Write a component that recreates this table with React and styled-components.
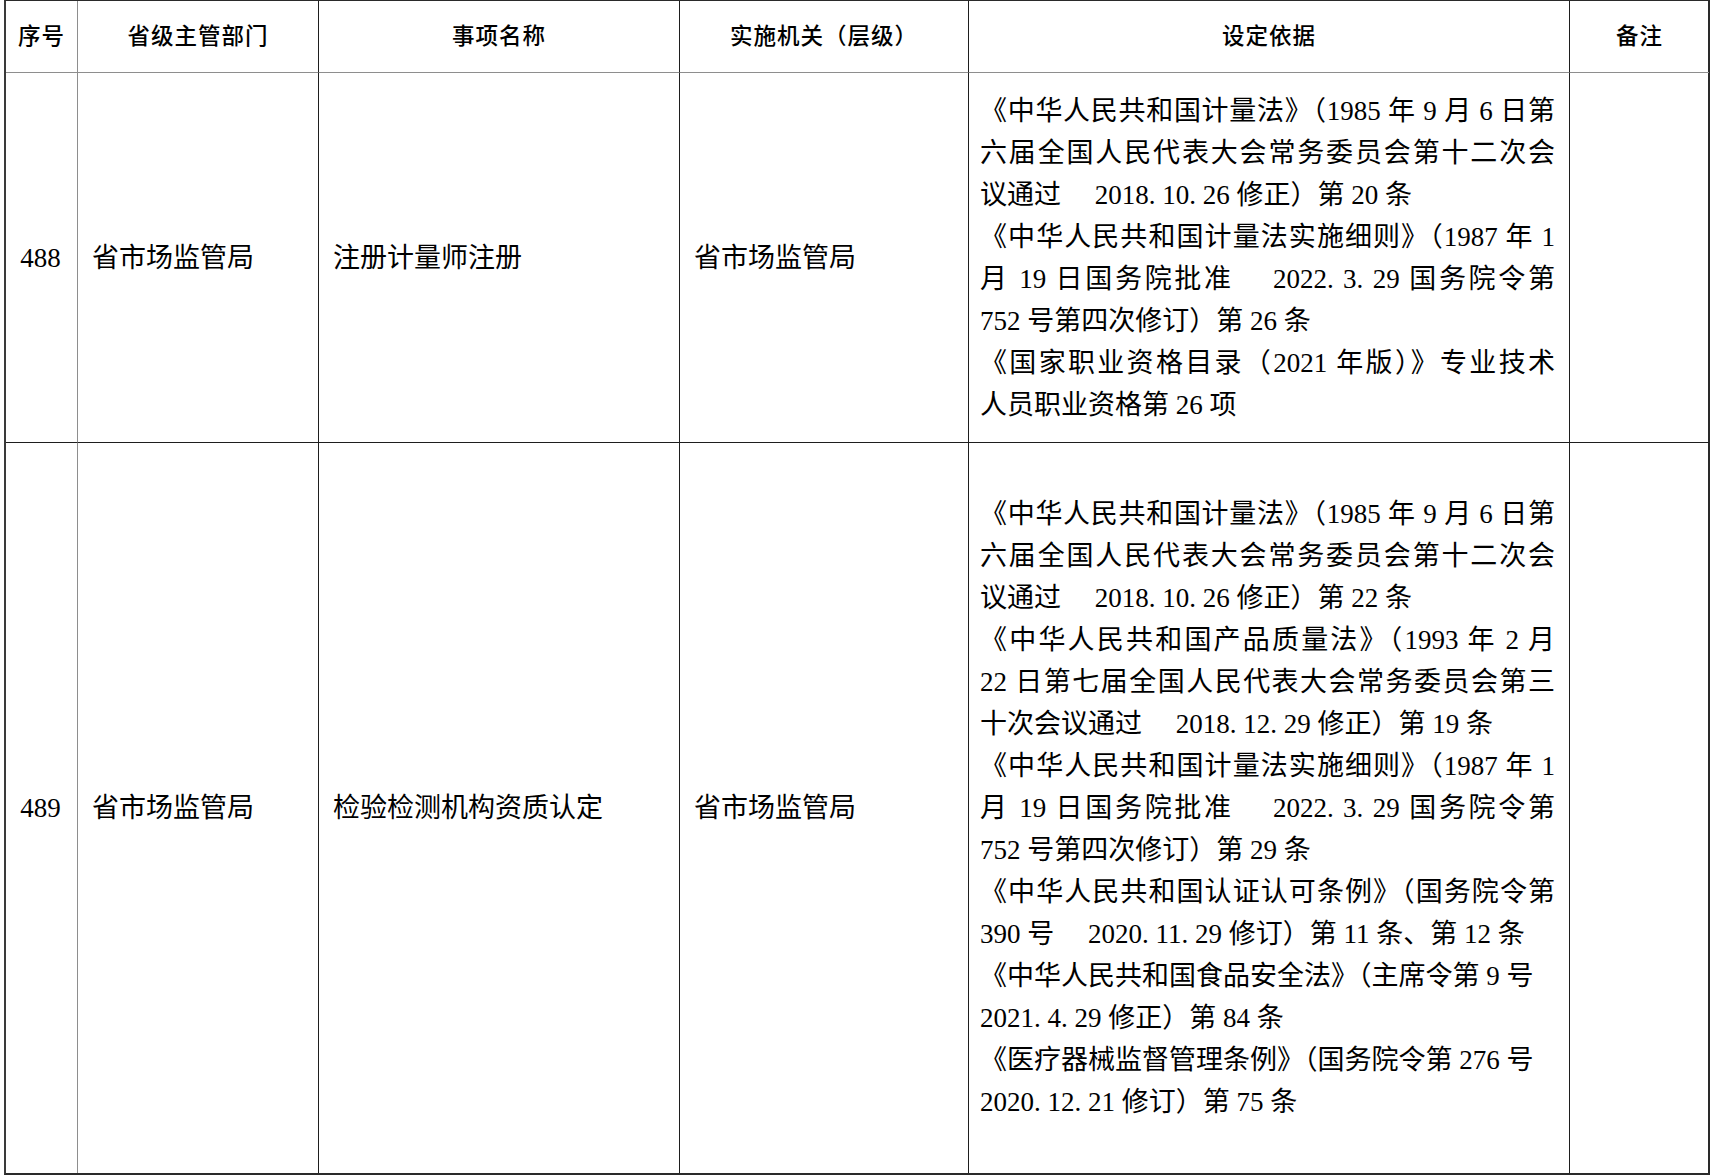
import React from "react";
import styled, { createGlobalStyle } from "styled-components";

const GlobalStyle = createGlobalStyle`
  html, body {
    margin: 0;
    padding: 0;
    background: #ffffff;
  }
  body {
    font-family: "Liberation Serif", "Noto Sans CJK SC", serif;
    color: #000;
  }
  * { box-sizing: border-box; }
`;

const Page = styled.div`
  width: 1711px;
  height: 1175px;
  padding-left: 4px;
  background: #fff;
`;

const Grid = styled.div`
  display: grid;
  width: 1706px;
  grid-template-columns: 72px 241px 361px 289px 601px 139px;
  grid-template-rows: 72px 370px 730px;
  border-top: 1px solid #2a2a2a;
  border-left: 2px solid #3a3a3a;
  border-right: 2px solid #2a2a2a;
  border-bottom: 2px solid #2a2a2a;
`;

const Cell = styled.div`
  display: flex;
  align-items: center;
  justify-content: ${(p) => (p.$center ? "center" : "flex-start")};
  padding: ${(p) => (p.$center ? "0 2px 0 0" : "0 0 0 14px")};
  border-right: ${(p) =>
    p.$last ? "none" : `1px solid ${p.$soft ? "#8e8e8e" : "#1e1e1e"}`};
  border-bottom: ${(p) =>
    p.$bottom ? `1px solid ${p.$softBottom ? "#8e8e8e" : "#1e1e1e"}` : "none"};
  font-size: 27px;
  line-height: 42px;
  white-space: nowrap;
`;

const HeadCell = styled(Cell)`
  justify-content: center;
  padding: 0 0 5px 0;
  font-family: "Noto Sans CJK SC", "Liberation Sans", sans-serif;
  font-weight: 500;
  font-size: 22.5px;
  letter-spacing: 1px;
`;

const Basis = styled(Cell)`
  flex-direction: column;
  align-items: stretch;
  justify-content: center;
  padding: 0 14px 0 11px;
  white-space: normal;
`;

const Line = styled.div`
  height: 42px;
  line-height: 42px;
  text-align: ${(p) => (p.$justify ? "justify" : "left")};
  text-align-last: ${(p) => (p.$justify ? "justify" : "left")};
  white-space: ${(p) => (p.$justify ? "normal" : "nowrap")};
  overflow: visible;
`;

const headers = [
  { t: "序号", soft: true },
  { t: "省级主管部门" },
  { t: "事项名称" },
  { t: "实施机关（层级）" },
  { t: "设定依据" },
  { t: "备注", last: true },
];

const rows = [
  {
    no: "488",
    dept: "省市场监管局",
    name: "注册计量师注册",
    org: "省市场监管局",
    bottom: true,
    lines: [
      ["《中华人民共和国计量法》（1985 年 9 月 6 日第", true],
      ["六届全国人民代表大会常务委员会第十二次会", true],
      ["议通过　 2018. 10. 26 修正）第 20 条", false],
      ["《中华人民共和国计量法实施细则》（1987 年 1", true],
      ["月 19 日国务院批准　 2022. 3. 29 国务院令第", true],
      ["752 号第四次修订）第 26 条", false],
      ["《国家职业资格目录（2021 年版）》专业技术", true],
      ["人员职业资格第 26 项", false],
    ],
  },
  {
    no: "489",
    dept: "省市场监管局",
    name: "检验检测机构资质认定",
    org: "省市场监管局",
    bottom: false,
    lines: [
      ["《中华人民共和国计量法》（1985 年 9 月 6 日第", true],
      ["六届全国人民代表大会常务委员会第十二次会", true],
      ["议通过　 2018. 10. 26 修正）第 22 条", false],
      ["《中华人民共和国产品质量法》（1993 年 2 月", true],
      ["22 日第七届全国人民代表大会常务委员会第三", true],
      ["十次会议通过　 2018. 12. 29 修正）第 19 条", false],
      ["《中华人民共和国计量法实施细则》（1987 年 1", true],
      ["月 19 日国务院批准　 2022. 3. 29 国务院令第", true],
      ["752 号第四次修订）第 29 条", false],
      ["《中华人民共和国认证认可条例》（国务院令第", true],
      ["390 号　 2020. 11. 29 修订）第 11 条、第 12 条", false],
      ["《中华人民共和国食品安全法》（主席令第 9 号", false],
      ["2021. 4. 29 修正）第 84 条", false],
      ["《医疗器械监督管理条例》（国务院令第 276 号", false],
      ["2020. 12. 21 修订）第 75 条", false],
    ],
  },
];

export default function App() {
  return (
    <Page>
      <GlobalStyle />
      <Grid>
        {headers.map((h) => (
          <HeadCell
            key={h.t}
            $soft={h.soft}
            $last={h.last}
            $bottom
            $softBottom
          >
            {h.t}
          </HeadCell>
        ))}
        {rows.map((r) => (
          <React.Fragment key={r.no}>
            <Cell $center $soft $bottom={r.bottom}>
              {r.no}
            </Cell>
            <Cell $bottom={r.bottom}>{r.dept}</Cell>
            <Cell $bottom={r.bottom}>{r.name}</Cell>
            <Cell $bottom={r.bottom}>{r.org}</Cell>
            <Basis $bottom={r.bottom}>
              {r.lines.map(([t, j], i) => (
                <Line key={i} $justify={j}>
                  {t}
                </Line>
              ))}
            </Basis>
            <Cell $last $bottom={r.bottom} />
          </React.Fragment>
        ))}
      </Grid>
    </Page>
  );
}
